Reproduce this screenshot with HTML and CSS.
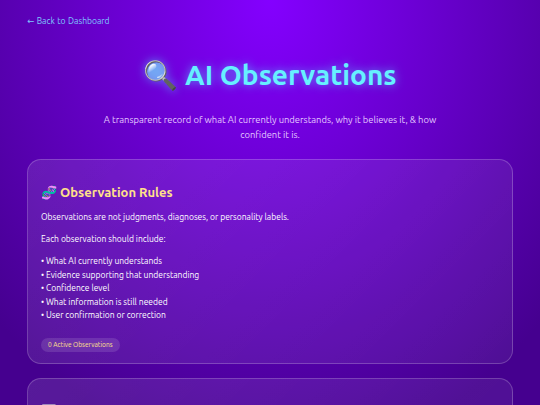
FILE: index.html
```html
<!DOCTYPE html>
<html lang="en">
<head>
<meta charset="utf-8">
<title>AI Observations</title>
<link rel="stylesheet" href="styles.css">
</head>
<body>
<main class="page">
  <a class="back" href="#">← Back to Dashboard</a>
  <header class="hero">
    <h1 class="title">🔍 AI Observations</h1>
    <p class="subtitle">A transparent record of what AI currently understands, why it believes it, &amp; how confident it is.</p>
  </header>
  <section class="card card-rules">
    <h2 class="card-title">🧬 Observation Rules</h2>
    <p class="text">Observations are not judgments, diagnoses, or personality labels.</p>
    <p class="text">Each observation should include:</p>
    <ul class="rules">
      <li>• What AI currently understands</li>
      <li>• Evidence supporting that understanding</li>
      <li>• Confidence level</li>
      <li>• What information is still needed</li>
      <li>• User confirmation or correction</li>
    </ul>
    <span class="pill">0 Active Observations</span>
  </section>
  <section class="card">
    <h2 class="card-title">⬜ Current Observations</h2>
  </section>
</main>
</body>
</html>
```
FILE: styles.css
```css
* { box-sizing: border-box; }
html, body { margin: 0; padding: 0; }
body {
  min-height: 100vh;
  background: radial-gradient(ellipse 380px 460px at 50% 0, #8400ff 0%, #45008f 100%);
  font-family: "Ubuntu", "DejaVu Sans", sans-serif;
  color: #fff;
}
.page { padding: 15px 27px 20px; }
.back { display: block; font-size: 8.5px; line-height: 13px; color: #7ec8ff; text-decoration: none; word-spacing: 0.6px; }
.hero { text-align: center; padding: 0 68px; }
.title {
  margin: 26px -68px 0;
  font-size: 28px;
  line-height: 42px;
  font-weight: 700;
  color: #66f0ff;
  text-shadow: 0 0 10px rgba(80, 220, 255, .7);
}
.subtitle { margin: 16px 0 0; font-size: 9.4px; line-height: 15px; color: #e4c8ff; }
.card {
  margin-top: 14px;
  padding: 22px 13px 11px;
  border: 1px solid rgba(255, 255, 255, .2);
  border-radius: 14px;
  background: linear-gradient(135deg, rgba(255,255,255,.1), rgba(255,255,255,.06));
}
.card-rules { margin-top: 17px; }
.card-title { margin: 0 0 10px; font-size: 13px; line-height: 20px; font-weight: 700; color: #ffe08a; }
.text { margin: 0 0 10.5px; font-size: 8.5px; line-height: 11px; color: #fff; }
.rules { list-style: none; margin: 0 0 15px; padding: 0; font-size: 8.5px; line-height: 13.5px; color: #fff; }
.pill { display: block; width: fit-content; padding: 1.5px 7px; border-radius: 8px; background: rgba(255,255,255,.12); font-size: 6.6px; line-height: 11px; color: #ffe08a; }
```
